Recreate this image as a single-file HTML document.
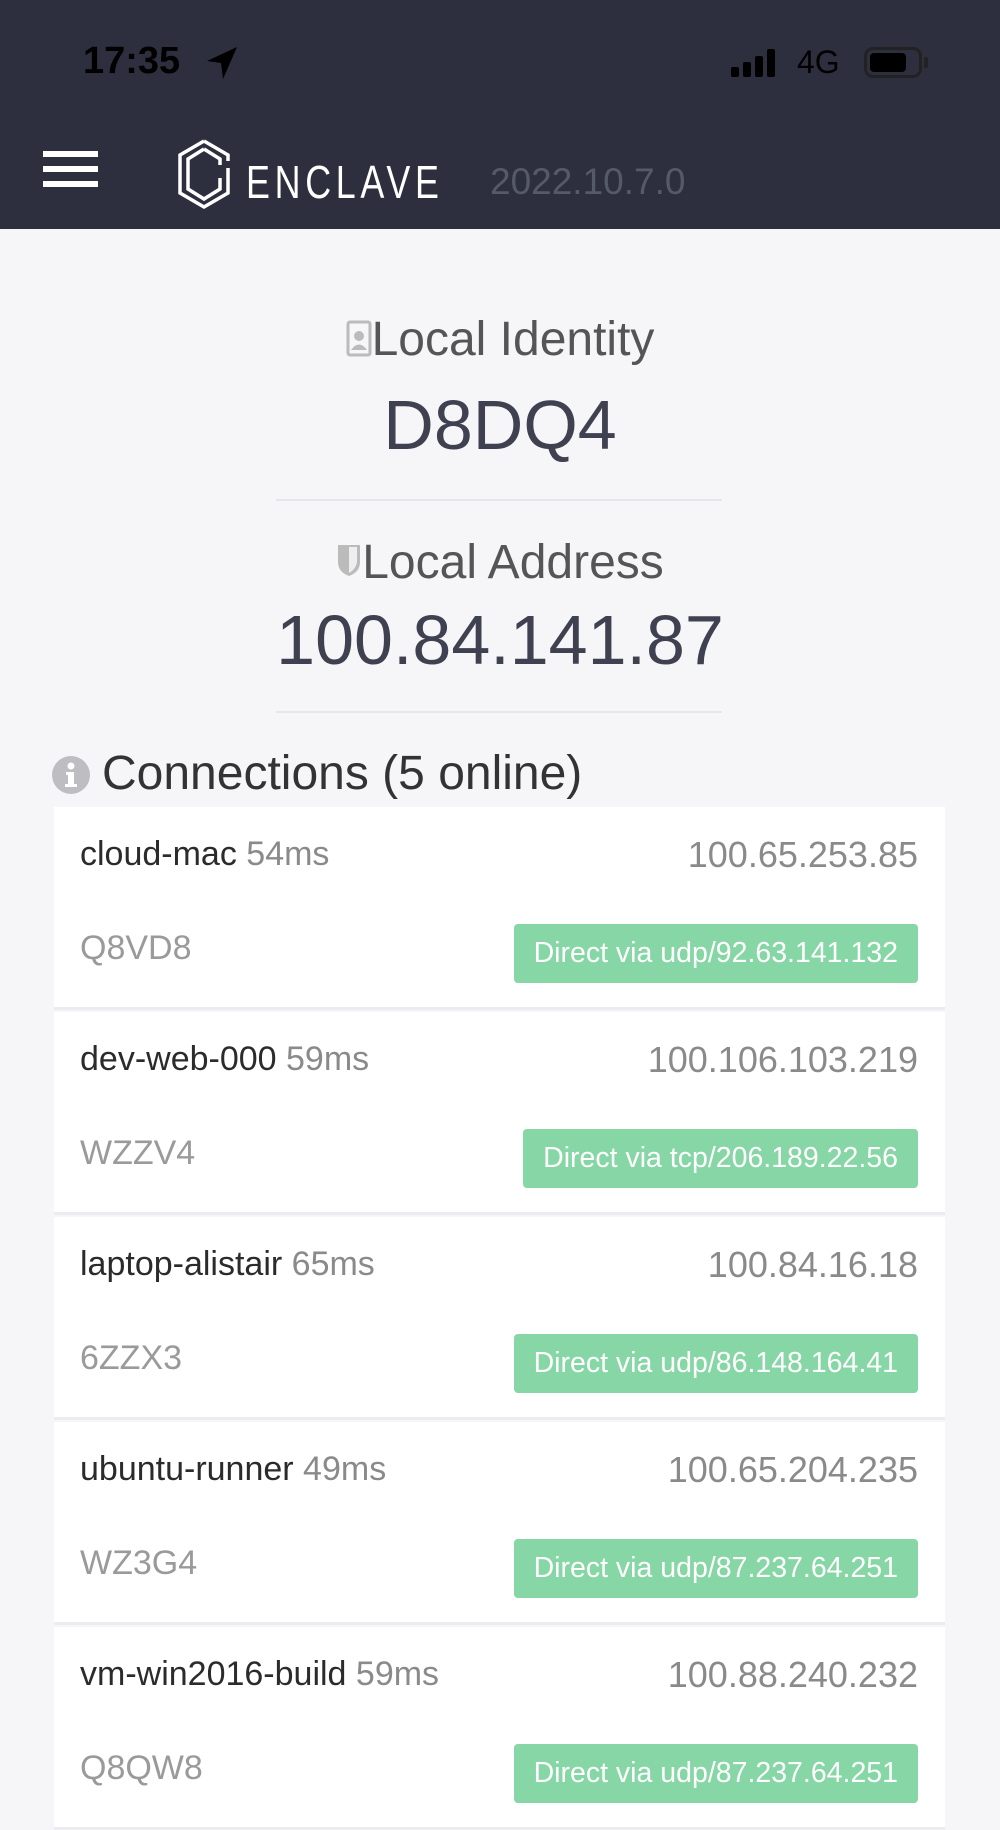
<!DOCTYPE html>
<html><head><meta charset="utf-8"><style>
*{margin:0;padding:0;box-sizing:border-box}
body{width:1000px;height:1778px;overflow:hidden;background:#f6f6f9;font-family:"Liberation Sans","DejaVu Sans",sans-serif;position:relative}
.hdr{position:absolute;left:0;top:0;width:1000px;height:229px;background:#2d2f3e}
.abs{position:absolute;white-space:nowrap}
.center{position:absolute;left:0;width:1000px;text-align:center;white-space:nowrap}
.hr{position:absolute;left:276px;width:446px;height:2px;background:#e6e6ea}
.card{position:absolute;left:54px;width:891px;height:203px;background:#fff;border-bottom:3px solid #ececf0}
.name{position:absolute;left:26px;top:28px;font-size:34px;color:#2b2b2b}
.name span{color:#8a8a8a}
.ip{position:absolute;right:27px;top:27px;font-size:36px;color:#8a8a8a}
.id{position:absolute;left:26px;top:122px;font-size:34px;color:#9a9a9a}
.badge{position:absolute;right:27px;top:117px;height:59px;line-height:59px;padding:0 20px;background:#86d6a6;color:#fff;font-size:28.5px;border-radius:4px}
</style></head><body>
<div class="hdr"></div>
<div class="abs" style="left:83px;top:40px;font-size:38px;font-weight:bold;color:#000">17:35</div>
<svg class="abs" style="left:205px;top:45px" width="34" height="36" viewBox="0 0 34 36"><path d="M32 2 L2 16 L16 18 L18 34 Z" fill="#000"/></svg>
<div class="abs" style="left:731px;top:48px;width:50px;height:30px">
<div class="abs" style="left:0;top:19px;width:8px;height:10px;background:#000;border-radius:2px"></div>
<div class="abs" style="left:12px;top:14px;width:8px;height:15px;background:#000;border-radius:2px"></div>
<div class="abs" style="left:24px;top:8px;width:8px;height:21px;background:#000;border-radius:2px"></div>
<div class="abs" style="left:36px;top:1px;width:8px;height:28px;background:#000;border-radius:2px"></div>
</div>
<div class="abs" style="left:797px;top:44px;font-size:32px;color:#000">4G</div>
<div class="abs" style="left:864px;top:47px;width:58px;height:31px;border:3px solid #222;border-radius:9px;padding:3px"><div style="width:36px;height:19px;background:#000;border-radius:4px"></div></div>
<div class="abs" style="left:924px;top:57px;width:4px;height:11px;background:#222;border-radius:2px"></div>
<div class="abs" style="left:43px;top:151px;width:55px;height:6px;background:#fff"></div>
<div class="abs" style="left:43px;top:166px;width:55px;height:6px;background:#fff"></div>
<div class="abs" style="left:43px;top:181px;width:55px;height:6px;background:#fff"></div>
<svg class="abs" style="left:172px;top:138px" width="64" height="72" viewBox="0 0 64 72"><g fill="none" stroke="#fff" stroke-width="3.5"><path d="M32 3 L56 17 L56 23 M32 3 L8 17 L8 55 L32 69 L56 55 L56 30"/><path d="M32 11 L48 21 L48 27 M32 11 L16 21 L16 51 L32 61 L48 51 L48 40"/></g></svg>
<div class="abs" style="left:246px;top:155px;font-size:46px;color:#fff;letter-spacing:6px;transform:scaleX(0.78);transform-origin:left">ENCLAVE</div>
<div class="abs" style="left:490px;top:161px;font-size:37px;color:#555a6a">2022.10.7.0</div>

<div class="center" style="top:312px;font-size:48px;color:#555">
<svg width="26" height="38" viewBox="0 0 26 38" style="vertical-align:-2px"><rect x="2" y="3" width="22" height="33" rx="2" fill="none" stroke="#bbb" stroke-width="3"/><circle cx="13" cy="17" r="5" fill="#bbb"/><path d="M5 31 Q13 20 21 31Z" fill="#bbb"/></svg>Local Identity</div>
<div class="center" style="top:385px;font-size:70px;color:#3f4150">D8DQ4</div>
<div class="hr" style="top:499px"></div>
<div class="center" style="top:535px;font-size:48px;color:#555">
<svg width="26" height="36" viewBox="0 0 26 36" style="vertical-align:0"><path d="M2 3 H24 V20 Q24 30 13 34 Q2 30 2 20Z" fill="#bbb"/><path d="M13 5 V31 Q20 27 21 20 V5Z" fill="#eee"/></svg>Local Address</div>
<div class="center" style="top:600px;font-size:70px;color:#3f4150">100.84.141.87</div>
<div class="hr" style="top:711px"></div>

<svg class="abs" style="left:51px;top:755px" width="40" height="40" viewBox="0 0 40 40"><circle cx="20" cy="20" r="19" fill="#bdbdc2"/><circle cx="20" cy="11" r="3.5" fill="#fff"/><path d="M15 17 H23 V29 H26 V32 H14 V29 H17 V20 H15Z" fill="#fff"/></svg>
<div class="abs" style="left:102px;top:746px;font-size:48px;color:#333">Connections (5 online)</div>

<div class="card" style="top:807px"><div class="name">cloud-mac <span>54ms</span></div><div class="ip">100.65.253.85</div><div class="id">Q8VD8</div><div class="badge">Direct via udp/92.63.141.132</div></div>
<div class="card" style="top:1012px"><div class="name">dev-web-000 <span>59ms</span></div><div class="ip">100.106.103.219</div><div class="id">WZZV4</div><div class="badge">Direct via tcp/206.189.22.56</div></div>
<div class="card" style="top:1217px"><div class="name">laptop-alistair <span>65ms</span></div><div class="ip">100.84.16.18</div><div class="id">6ZZX3</div><div class="badge">Direct via udp/86.148.164.41</div></div>
<div class="card" style="top:1422px"><div class="name">ubuntu-runner <span>49ms</span></div><div class="ip">100.65.204.235</div><div class="id">WZ3G4</div><div class="badge">Direct via udp/87.237.64.251</div></div>
<div class="card" style="top:1627px"><div class="name">vm-win2016-build <span>59ms</span></div><div class="ip">100.88.240.232</div><div class="id">Q8QW8</div><div class="badge">Direct via udp/87.237.64.251</div></div>
</body></html>
